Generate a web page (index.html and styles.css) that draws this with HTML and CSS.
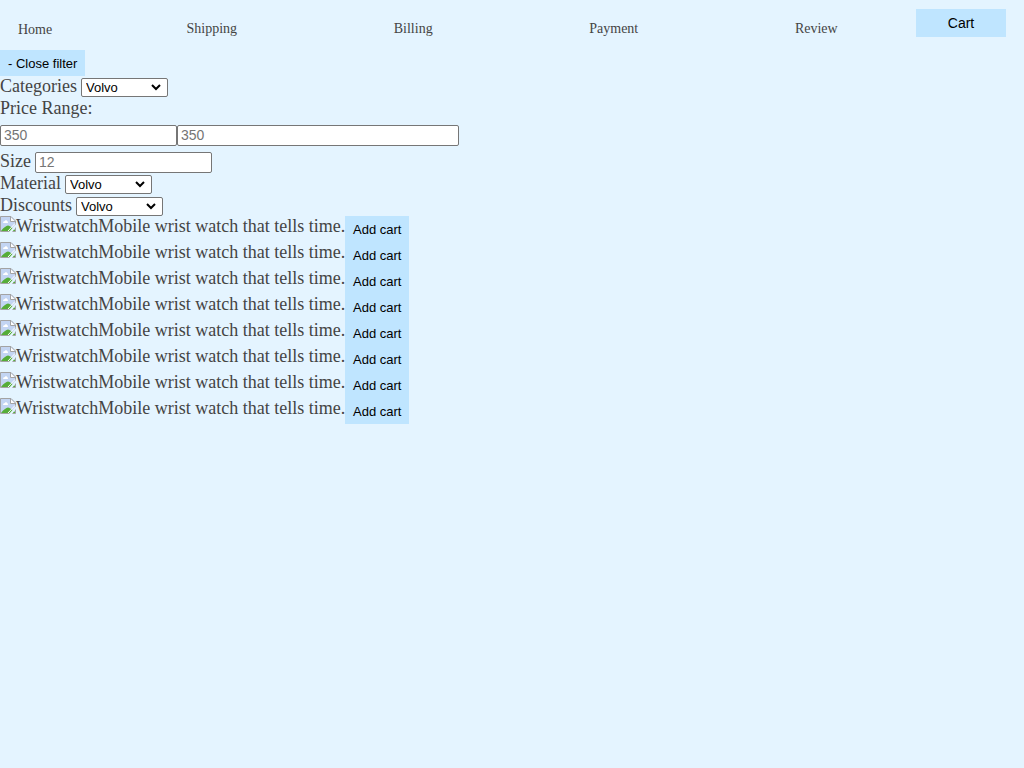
FILE: index.html
```html
<!DOCTYPE html>
<html lang="en">
<head>
<meta charset="utf-8">
<title>Shop</title>
<link rel="stylesheet" href="styles.css">
</head>
<body>
<svg class="sprite" aria-hidden="true">
  <symbol id="picture" viewBox="0 0 16 16">
    <path d="M.5 .5H11L15.500 5V15.500H.5Z" fill="#c3d5f3" stroke="#a3a3a3"/>
    <path d="M3 7Q3 5 5 5Q6 3 7 5Q8 5 8 7Z" fill="#fff"/>
    <path d="M1 15Q3 12 5 11Q8 8 11 11L15 14V15Z" fill="#55ad38"/>
    <path d="M9 16L16 8V11L12 16Z" fill="#e4f4ff"/>
    <path d="M8 15L15 7.500" fill="none" stroke="#fff"/>
    <path d="M10.500 1V5.500H15" fill="#fff" stroke="#a3a3a3"/>
  </symbol>
</svg>
<header class="header">
  <a class="home" href="#">Home</a>
  <nav class="nav">
    <a class="link" href="#">Shipping</a>
    <a class="link" href="#">Billing</a>
    <a class="link" href="#">Payment</a>
    <a class="link" href="#">Review</a>
  </nav>
  <button class="button cart" type="button">Cart</button>
</header>
<main>
  <button class="button toggle" type="button">- Close filter</button>
  <form class="filters">
    <div class="field">
      <label for="categories">Categories</label>
      <select class="select" id="categories"><option>Volvo</option></select>
    </div>
    <div class="field"><label for="price-min">Price Range:</label></div>
    <div class="range">
      <input class="input" id="price-min" type="text" placeholder="350">
      <input class="input wide" type="text" placeholder="350" aria-label="Maximum price">
    </div>
    <div class="field">
      <label for="size">Size</label>
      <input class="input" id="size" type="text" placeholder="12">
    </div>
    <div class="field">
      <label for="material">Material</label>
      <select class="select" id="material"><option>Volvo</option></select>
    </div>
    <div class="field">
      <label for="discounts">Discounts</label>
      <select class="select" id="discounts"><option>Volvo</option></select>
    </div>
  </form>
  <div class="products">
    <div class="product"><svg class="icon"><use href="#picture"/></svg><span>Wristwatch</span><span>Mobile wrist watch that tells time.</span><button class="button add" type="button">Add cart</button></div>
    <div class="product"><svg class="icon"><use href="#picture"/></svg><span>Wristwatch</span><span>Mobile wrist watch that tells time.</span><button class="button add" type="button">Add cart</button></div>
    <div class="product"><svg class="icon"><use href="#picture"/></svg><span>Wristwatch</span><span>Mobile wrist watch that tells time.</span><button class="button add" type="button">Add cart</button></div>
    <div class="product"><svg class="icon"><use href="#picture"/></svg><span>Wristwatch</span><span>Mobile wrist watch that tells time.</span><button class="button add" type="button">Add cart</button></div>
    <div class="product"><svg class="icon"><use href="#picture"/></svg><span>Wristwatch</span><span>Mobile wrist watch that tells time.</span><button class="button add" type="button">Add cart</button></div>
    <div class="product"><svg class="icon"><use href="#picture"/></svg><span>Wristwatch</span><span>Mobile wrist watch that tells time.</span><button class="button add" type="button">Add cart</button></div>
    <div class="product"><svg class="icon"><use href="#picture"/></svg><span>Wristwatch</span><span>Mobile wrist watch that tells time.</span><button class="button add" type="button">Add cart</button></div>
    <div class="product"><svg class="icon"><use href="#picture"/></svg><span>Wristwatch</span><span>Mobile wrist watch that tells time.</span><button class="button add" type="button">Add cart</button></div>
  </div>
</main>
</body>
</html>
```

FILE: styles.css
```css
* {
  box-sizing: border-box;
}

body {
  margin: 0;
  background: #e4f4ff;
  color: #444;
  font-family: "Liberation Serif", "Times New Roman", serif;
  font-size: 18px;
  line-height: 20px;
}

.sprite {
  display: none;
}

.header {
  display: flex;
  align-items: flex-start;
  padding: 9px 18px 10px;
  font-size: 14px;
}

.home,
.link {
  color: inherit;
  text-decoration: none;
}

.home {
  padding-top: 11px;
}

.nav {
  display: flex;
  flex: 1;
  justify-content: space-around;
  margin-left: 56px;
  padding-top: 10px;
}

.button {
  border: 0;
  background: #bfe5ff;
  color: #000;
  font-family: "Liberation Sans", Arial, sans-serif;
  font-size: 13px;
  line-height: 16px;
}

.cart {
  width: 90px;
  padding: 6px;
  font-size: 14px;
}

.toggle {
  display: block;
  padding: 6px 8px 4px;
}

.field {
  display: flex;
  align-items: flex-start;
  gap: 4px;
  min-height: 22px;
}

.field:last-child {
  min-height: 0;
}

.select {
  appearance: none;
  width: 87px;
  height: 19px;
  margin-top: 2px;
  padding: 0 20px 0 4px;
  border: 1px solid #767676;
  border-radius: 2px;
  background: #fff url("data:image/svg+xml,%3Csvg xmlns='http://www.w3.org/2000/svg' width='10' height='7'%3E%3Cpath d='M1 1L5 5L9 1' fill='none' stroke='%23000' stroke-width='2'/%3E%3C/svg%3E") no-repeat right 6px center;
  color: #000;
  font-family: "Liberation Sans", Arial, sans-serif;
  font-size: 13px;
}

.range {
  display: flex;
  padding: 5px 0;
}

.input {
  width: 177px;
  height: 21px;
  margin: 0;
  padding: 0 3px 1px;
  border: 1px solid #767676;
  border-radius: 2px;
  font-family: "Liberation Sans", Arial, sans-serif;
  font-size: 14px;
}

.wide {
  width: 282px;
}

.field .input {
  margin-top: 1px;
}

.product {
  display: flex;
  align-items: flex-start;
}

.icon {
  width: 16px;
  height: 16px;
}

.add {
  width: 64px;
  padding: 6px 0 4px;
}
```
